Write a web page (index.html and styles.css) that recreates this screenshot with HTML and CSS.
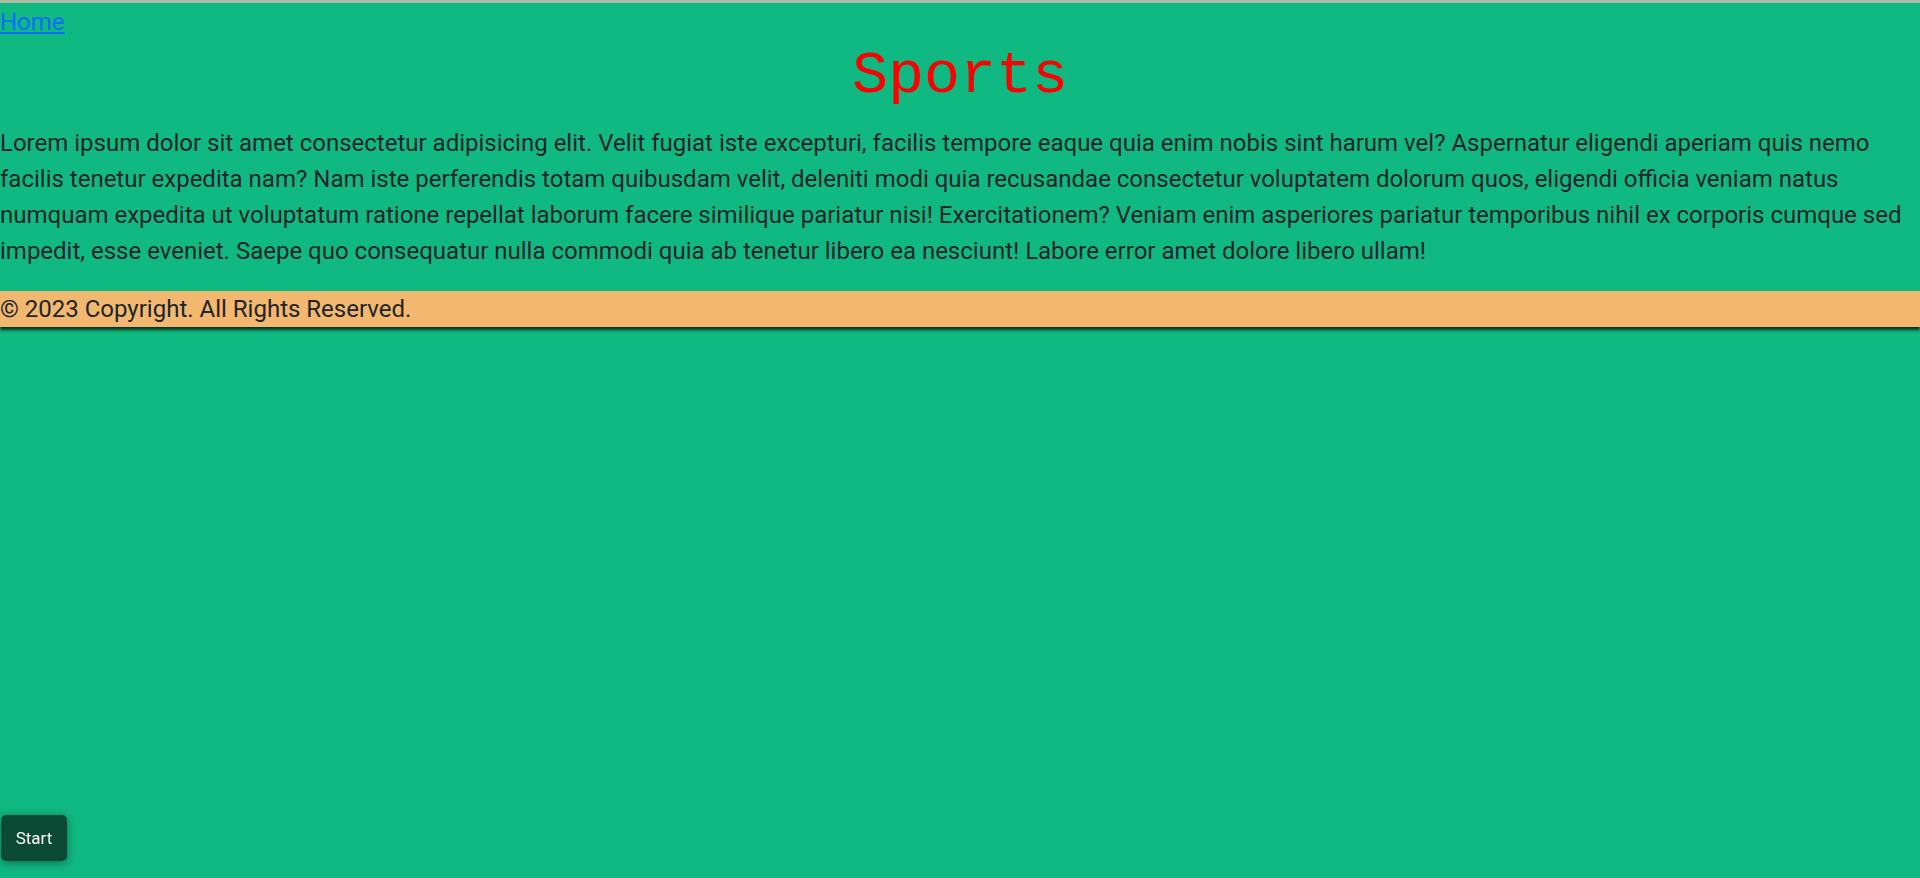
FILE: index.html
```html
<!DOCTYPE html>
<html lang="en">
<head>
<meta charset="utf-8">
<title>Sports</title>
<link rel="stylesheet" href="styles.css">
</head>
<body>
<nav class="nav"><a class="nav-link" href="#">Home</a></nav>
<h1 class="title">Sports</h1>
<p class="content">Lorem ipsum dolor sit amet consectetur adipisicing elit. Velit fugiat iste excepturi, facilis tempore eaque quia enim nobis sint harum vel? Aspernatur eligendi aperiam quis nemo facilis tenetur expedita nam? Nam iste perferendis totam quibusdam velit, deleniti modi quia recusandae consectetur voluptatem dolorum quos, eligendi officia veniam natus numquam expedita ut voluptatum ratione repellat laborum facere similique pariatur nisi! Exercitationem? Veniam enim asperiores pariatur temporibus nihil ex corporis cumque sed impedit, esse eveniet. Saepe quo consequatur nulla commodi quia ab tenetur libero ea nesciunt! Labore error amet dolore libero ullam!</p>
<footer class="footer">© 2023 Copyright. All Rights Reserved.</footer>
<button class="start-btn" type="button">Start</button>
</body>
</html>
```
FILE: styles.css
```css
html, body {
  margin: 0;
  padding: 0;
}
body {
  min-height: 875px;
  background: #10b981;
  border-top: 3px solid #a9bea2;
  font-family: Roboto, "Liberation Sans", sans-serif;
  font-size: 24px;
  line-height: 36px;
  color: #212529;
}
.nav {
  display: block;
  padding-top: 1px;
}
.nav-link {
  color: #0d6efd;
  text-decoration: underline;
}
.title {
  margin: 1px 0 14px;
  text-align: center;
  font-family: "Liberation Mono", "Courier New", monospace;
  font-weight: 400;
  font-size: 60px;
  line-height: 70px;
  color: #ff0000;
}
.content {
  margin: 0 0 22px;
}
.footer {
  background: #f3b86f;
  box-shadow: 0 3px 3px rgba(0, 0, 0, 0.75);
  height: 36px;
}
.start-btn {
  position: fixed;
  left: 1px;
  bottom: 17px;
  width: 66px;
  height: 46px;
  padding: 0;
  border: none;
  border-radius: 5px;
  background: #0b4a35;
  color: #ffffff;
  font-family: Roboto, "Liberation Sans", sans-serif;
  font-size: 17px;
  box-shadow: 0 2px 10px rgba(0, 0, 0, 0.4);
}
```
